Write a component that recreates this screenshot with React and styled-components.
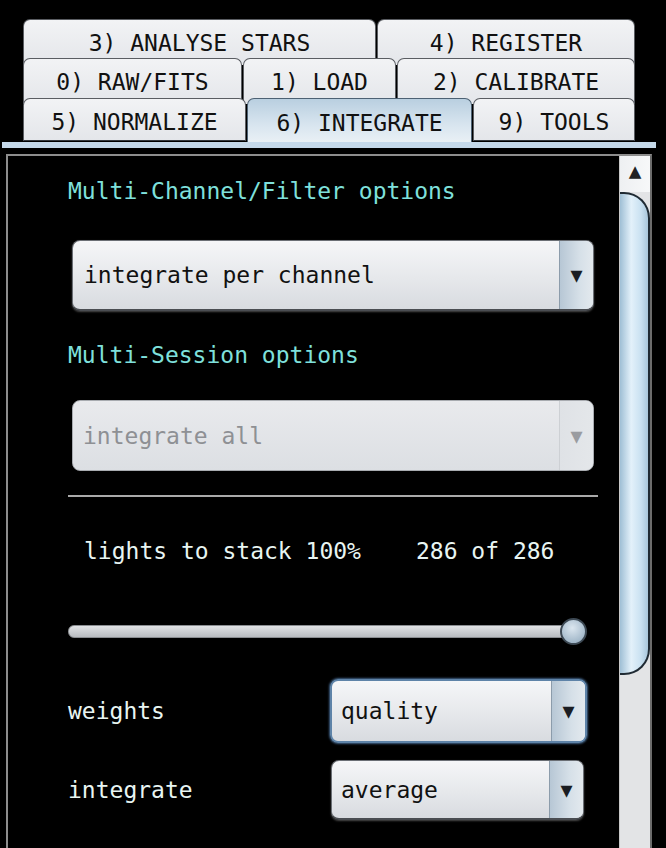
import React from "react";
import styled, { createGlobalStyle, css } from "styled-components";

const GlobalStyle = createGlobalStyle`
  html, body {
    margin: 0;
    padding: 0;
    background: #000;
  }
  body {
    font-family: "DejaVu Sans Mono", "Liberation Mono", monospace;
  }
`;

const Screen = styled.div`
  width: 666px;
  height: 848px;
  overflow: hidden;
  background: #000;
  display: flex;
  flex-direction: column;
`;

const TabBar = styled.div`
  display: flex;
  flex-direction: column;
  padding: 19px 0 0 23px;
`;

const TabRow = styled.div`
  display: flex;
  gap: 1px;
  height: ${(p) => p.$h || 40}px;
`;

const Tab = styled.div`
  width: ${(p) => p.$w}px;
  box-sizing: border-box;
  display: flex;
  align-items: center;
  justify-content: center;
  font-size: 23px;
  color: #111;
  border: 1px solid #5a5d62;
  border-bottom: none;
  border-radius: 7px 7px 0 0;
  background: linear-gradient(#f2f3f5, #e4e6ea);
  height: 46px;
  align-self: flex-start;
  ${(p) =>
    p.$last &&
    css`
      height: 43px;
      padding-top: 4px;
      border-bottom: 1px solid #33373c;
    `}
  ${(p) =>
    p.$active &&
    css`
      background: linear-gradient(#b9cfe0, #d8e5ef 60%, #e9f0f5);
      border-color: #4d6173;
      border-bottom: none;
      height: 44px;
    `}
`;

const TabBase = styled.div`
  height: 6px;
  margin: 0 10px 0 2px;
  background: #c5d9ea;
`;

const Panel = styled.div`
  margin: 6px 14px 0 6px;
  flex: 1;
  display: flex;
  border-top: 2px solid #8d8d8d;
  border-left: 2px solid #8d8d8d;
  border-right: 2px solid #6c6c6c;
`;

const Content = styled.div`
  flex: 1;
  display: flex;
  flex-direction: column;
  padding: 21px 0 0 60px;
`;

const Heading = styled.div`
  font-size: 23px;
  line-height: 28px;
  color: #7fe0dc;
  margin-top: ${(p) => p.$mt || 0}px;
`;

const Combo = styled.div`
  box-sizing: border-box;
  display: flex;
  width: ${(p) => p.$w}px;
  height: ${(p) => p.$h}px;
  margin-top: ${(p) => p.$mt || 0}px;
  margin-left: ${(p) => p.$ml || 0}px;
  border-radius: 8px;
  overflow: hidden;
  border: 1px solid #6b6f75;
  border-bottom: 2px solid #4a4d52;
  background: linear-gradient(#f5f6f8, #e6e8eb 55%, #d8dbe0);
  box-shadow: 0 1px 2px rgba(120, 120, 120, 0.6);
  ${(p) =>
    p.$disabled &&
    css`
      border: 1px solid #a8abb0;
      background: linear-gradient(#e9eaed, #dcdfe3);
      box-shadow: none;
    `}
  ${(p) =>
    p.$focus &&
    css`
      border: 2px solid #5e83a8;
      box-shadow: 0 0 2px 1px #3d5d80;
    `}
`;

const ComboText = styled.div`
  flex: 1;
  display: flex;
  align-items: center;
  padding-left: ${(p) => p.$pl || 11}px;
  font-size: 23px;
  color: ${(p) => (p.$disabled ? "#8e9094" : "#111")};
`;

const ComboArrow = styled.div`
  width: 33px;
  display: flex;
  align-items: center;
  justify-content: center;
  font-size: 20px;
  color: ${(p) => (p.$disabled ? "#9a9ca0" : "#1a1d22")};
  border-left: 1px solid ${(p) => (p.$disabled ? "#cdd0d4" : "#8c9cab")};
  background: ${(p) =>
    p.$disabled
      ? "linear-gradient(90deg, #dfe2e6, #e4e7ea)"
      : "linear-gradient(90deg, #b7c7d5, #d6e0e8 60%, #e3e9ee)"};
`;

const Divider = styled.div`
  width: 530px;
  height: 2px;
  margin-top: 24px;
  background: #a9a9a9;
`;

const Stats = styled.div`
  display: flex;
  gap: 55px;
  margin: 40px 0 0 16px;
  font-size: 23px;
  line-height: 28px;
  color: #e8f5f2;
`;

const SliderWrap = styled.div`
  position: relative;
  width: 518px;
  height: 28px;
  margin-top: 52px;
  display: flex;
  align-items: center;
`;

const Track = styled.div`
  width: 100%;
  height: 11px;
  border-radius: 6px;
  border: 1px solid #8a8d91;
  background: linear-gradient(#e0e2e5, #b9bcc0);
`;

const Handle = styled.div`
  position: absolute;
  right: -1px;
  top: 1px;
  width: 23px;
  height: 23px;
  border-radius: 50%;
  border: 2px solid #3d4954;
  background: radial-gradient(circle at 45% 35%, #dbe6ef, #a5bacb 70%, #8ea3b6);
`;

const FieldRow = styled.div`
  display: flex;
  align-items: center;
  margin-top: ${(p) => p.$mt}px;
`;

const FieldLabel = styled.div`
  width: 262px;
  font-size: 23px;
  color: #e8f5f2;
`;

const Scrollbar = styled.div`
  width: 30px;
  display: flex;
  flex-direction: column;
  background: #e3e4e6;
  border-left: 1px solid #c8c8c8;
`;

const ScrollButton = styled.div`
  height: 36px;
  display: flex;
  align-items: flex-start;
  justify-content: center;
  padding-top: 3px;
  box-sizing: border-box;
  font-size: 21px;
  color: #222;
  background: linear-gradient(90deg, #eef0f2, #f7f8f9);
`;

const Thumb = styled.div`
  height: 483px;
  box-sizing: border-box;
  border: 2px solid #1f2a33;
  border-left: none;
  border-radius: 0 26px 26px 0;
  background: linear-gradient(90deg, #9fbfd5, #e3f1fa 40%, #c9e1f1 75%, #a8c6db);
`;

const Select = ({ value, w, h, mt, ml, disabled, focus, pl }) => (
  <Combo $w={w} $h={h} $mt={mt} $ml={ml} $disabled={disabled} $focus={focus}>
    <ComboText $disabled={disabled} $pl={pl}>{value}</ComboText>
    <ComboArrow $disabled={disabled}>▼</ComboArrow>
  </Combo>
);

const App = () => {
  return (
    <>
      <GlobalStyle />
      <Screen>
        <TabBar>
          <TabRow $h={39}>
            <Tab $w={353}>3) ANALYSE STARS</Tab>
            <Tab $w={258}>4) REGISTER</Tab>
          </TabRow>
          <TabRow $h={40}>
            <Tab $w={219}>0) RAW/FITS</Tab>
            <Tab $w={153}>1) LOAD</Tab>
            <Tab $w={238}>2) CALIBRATE</Tab>
          </TabRow>
          <TabRow $h={44}>
            <Tab $w={223} $last>5) NORMALIZE</Tab>
            <Tab $w={225} $last $active>6) INTEGRATE</Tab>
            <Tab $w={162} $last>9) TOOLS</Tab>
          </TabRow>
        </TabBar>
        <TabBase />
        <Panel>
          <Content>
            <Heading>Multi-Channel/Filter options</Heading>
            <Select value="integrate per channel" w={522} h={71} mt={35} ml={4} />
            <Heading $mt={30}>Multi-Session options</Heading>
            <Select value="integrate all" w={522} h={71} mt={31} ml={4} pl={10} disabled />
            <Divider />
            <Stats>
              <span>lights to stack 100%</span>
              <span>286 of 286</span>
            </Stats>
            <SliderWrap>
              <Track />
              <Handle />
            </SliderWrap>
            <FieldRow $mt={34}>
              <FieldLabel>weights</FieldLabel>
              <Select value="quality" w={257} h={64} pl={9} focus />
            </FieldRow>
            <FieldRow $mt={17}>
              <FieldLabel>integrate</FieldLabel>
              <Select value="average" w={253} h={60} ml={1} pl={9} />
            </FieldRow>
          </Content>
          <Scrollbar>
            <ScrollButton>▲</ScrollButton>
            <Thumb />
          </Scrollbar>
        </Panel>
      </Screen>
    </>
  );
};

export default App;
